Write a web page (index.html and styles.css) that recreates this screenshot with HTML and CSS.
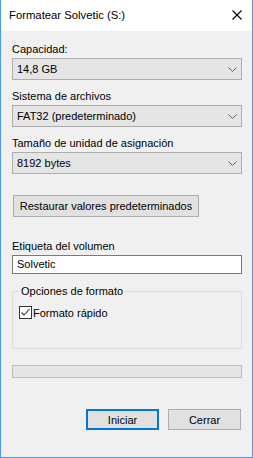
FILE: index.html
```html
<!DOCTYPE html>
<html>
<head>
  <meta charset="UTF-8">
  <title>Formatear Solvetic (S:)</title>
  <link rel="stylesheet" href="styles.css">
</head>
<body>
  <div class="window">
    <div class="titlebar">
      <span class="title">Formatear Solvetic (S:)</span>
      <svg class="close" width="10" height="10" viewBox="0 0 10 10">
        <path d="M0.5 0.5 L9.5 9.5 M9.5 0.5 L0.5 9.5" stroke="#000" stroke-width="1.1" fill="none"/>
      </svg>
    </div>
    <div class="content">
      <div class="label first">Capacidad:</div>
      <div class="combo"><span>14,8 GB</span><svg class="chev" width="9" height="5" viewBox="0 0 9 5"><path d="M0.5 0.5 L4.5 4.5 L8.5 0.5" stroke="#606060" fill="none"/></svg></div>

      <div class="label">Sistema de archivos</div>
      <div class="combo"><span>FAT32 (predeterminado)</span><svg class="chev" width="9" height="5" viewBox="0 0 9 5"><path d="M0.5 0.5 L4.5 4.5 L8.5 0.5" stroke="#606060" fill="none"/></svg></div>

      <div class="label">Tamaño de unidad de asignación</div>
      <div class="combo"><span>8192 bytes</span><svg class="chev" width="9" height="5" viewBox="0 0 9 5"><path d="M0.5 0.5 L4.5 4.5 L8.5 0.5" stroke="#606060" fill="none"/></svg></div>

      <div class="btn restore">Restaurar valores predeterminados</div>

      <div class="label volume">Etiqueta del volumen</div>
      <div class="textbox">Solvetic</div>

      <fieldset class="group">
        <legend>Opciones de formato</legend>
        <div class="check">
          <svg class="box" width="13" height="13" viewBox="0 0 13 13">
            <rect x="0.5" y="0.5" width="12" height="12" fill="#fff" stroke="#333"/>
            <path d="M2.5 6.5 L5 9 L10.5 3" stroke="#333" stroke-width="1.1" fill="none"/>
          </svg>
          <span>Formato rápido</span>
        </div>
      </fieldset>

      <div class="progress"></div>

      <div class="actions">
        <div class="btn primary">Iniciar</div>
        <div class="btn">Cerrar</div>
      </div>
    </div>
  </div>
</body>
</html>
```

FILE: styles.css
```css
html, body {
  margin: 0;
  padding: 0;
}
body {
  font-family: "Liberation Sans", Arial, sans-serif;
  font-size: 11px;
  color: #000000;
  background: #ffffff;
}
.window {
  width: 253px;
  height: 458px;
  box-sizing: border-box;
  border: 1px solid #4a97ee;
  border-top: none;
  background: #f0f0f0;
  display: flex;
  flex-direction: column;
}
.titlebar {
  height: 31px;
  background: #ffffff;
  display: flex;
  align-items: center;
  justify-content: space-between;
  padding: 0 10px 2px 8px;
  box-sizing: border-box;
}
.title {
  font-size: 11.3px;
}
.content {
  padding: 0 10px 0 11px;
}
.label {
  line-height: 16px;
  margin-top: 8px;
  margin-bottom: 1px;
  white-space: nowrap;
}
.label.first {
  margin-top: 10px;
}
.combo {
  height: 22px;
  box-sizing: border-box;
  border: 1px solid #adadad;
  background: #e5e5e5;
  display: flex;
  align-items: center;
  justify-content: space-between;
  padding: 0 4px 0 4px;
}
.btn {
  height: 22px;
  box-sizing: border-box;
  border: 1px solid #adadad;
  background: #e1e1e1;
  display: flex;
  align-items: center;
  justify-content: center;
  white-space: nowrap;
}
.restore {
  width: 186px;
  margin: 21px 0 0 1px;
}
.label.volume {
  margin-top: 21px;
}
.textbox {
  height: 19px;
  box-sizing: border-box;
  border: 1px solid #7a7a7a;
  background: #ffffff;
  padding: 0 4px;
  line-height: 17px;
}
.group {
  margin: 9px 0 0 0;
  padding: 0 6px;
  border: 1px solid #dcdcdc;
  height: 66px;
  box-sizing: border-box;
}
.group legend {
  padding: 0 2px;
  line-height: 16px;
}
.check {
  display: flex;
  align-items: center;
  margin-top: 7px;
}
.check span {
  margin-left: 1px;
}
.progress {
  height: 13px;
  box-sizing: border-box;
  border: 1px solid #bcbcbc;
  background: #e6e6e6;
  margin-top: 16px;
}
.actions {
  display: flex;
  justify-content: flex-end;
  gap: 9px;
  margin-top: 31px;
  padding-right: 1px;
}
.actions .btn {
  width: 73px;
  height: 21px;
}
.btn.primary {
  border: 2px solid #0078d7;
}
```
